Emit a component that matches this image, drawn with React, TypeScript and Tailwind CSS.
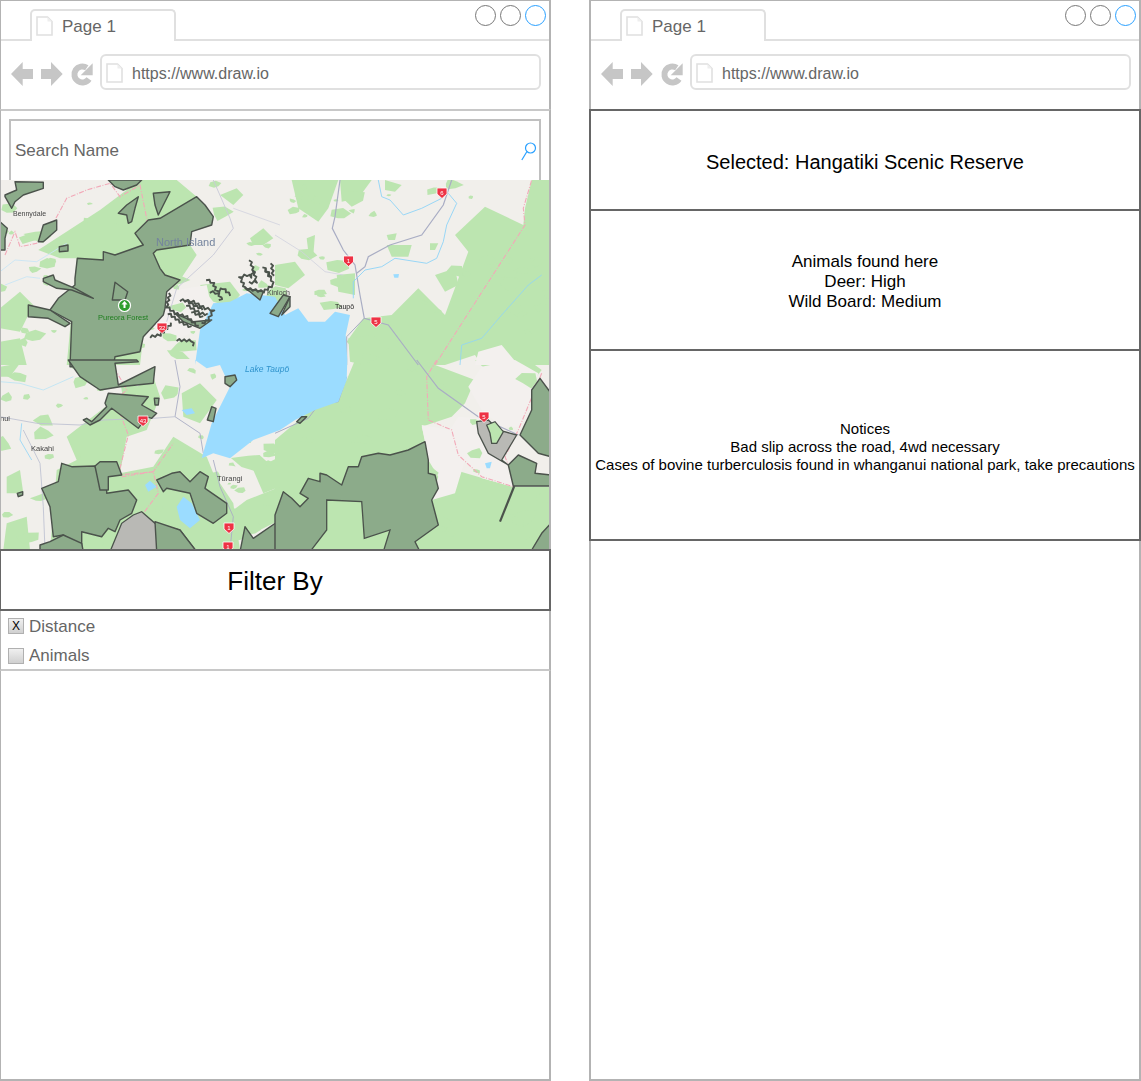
import React from "react";

const z = (ox: number, oy: number, s: string) =>
  s
    .trim()
    .split(/\s+/)
    .map((p) => {
      const [x, y] = p.split(",").map(Number);
      return `${(ox + x / 3).toFixed(1)},${(oy + y / 3).toFixed(1)}`;
    })
    .join(" ");

const jag = (s: string) => {
  const pts = s.split(" ").map((p) => p.split(",").map(Number));
  const out: string[] = [];
  let flip = 1;
  for (let i = 0; i < pts.length - 1; i++) {
    const [x1, y1] = pts[i];
    const [x2, y2] = pts[i + 1];
    const d = Math.hypot(x2 - x1, y2 - y1);
    const n = Math.max(1, Math.round(d / 2.5));
    for (let k = 0; k < n; k++) {
      const t = k / n;
      flip = -flip;
      out.push(`${(x1 + (x2 - x1) * t + (flip * (y2 - y1) * 1.1) / (d || 1)).toFixed(1)},${(y1 + (y2 - y1) * t - (flip * (x2 - x1) * 1.1) / (d || 1)).toFixed(1)}`);
    }
  }
  return out.join(" ");
};

const GREEN = "#bce5b0";
const FOREST = "#8cab8a";
const STROKE = "#4b524c";
const WATER = "#9bdcff";
const ROAD = "#a9adc4";
const RIVER = "#8fd4f7";

function makeBlobs() {
  let seed = 12345;
  const rnd = () => {
    seed = (seed * 16807) % 2147483647;
    return seed / 2147483647;
  };
  const out: string[] = [];
  for (let i = 0; i < 230; i++) {
    const x = rnd() * 550;
    const y = 180 + rnd() * 370;
    const r = 2 + rnd() * rnd() * 13;
    const n = 6;
    const pts: string[] = [];
    const rot = rnd() * 6.28;
    for (let k = 0; k < n; k++) {
      const a = rot + (k / n) * 6.28;
      const rr = r * (0.45 + rnd() * 0.75);
      pts.push(`${(x + Math.cos(a) * rr * 1.3).toFixed(1)},${(y + Math.sin(a) * rr * 0.8).toFixed(1)}`);
    }
    out.push(pts.join(" "));
  }
  return out;
}
const blobs = makeBlobs();

const greens: string[] = [
  z(275, 175, "630,95 745,150 750,100 770,15 830,15 830,570 620,570 600,540 510,570 280,570 215,500 265,430 350,420 430,340 510,420 580,230 540,180"),
  z(275, 360, "0,240 215,60 240,0 440,0 600,60 570,130 530,170 440,200 450,240 540,330 710,380 830,380 830,570 0,570"),
  z(0, 175, "115,225 300,105 420,15 530,15 590,65 640,125 575,170 570,210 590,240 540,315 500,350 430,485 420,570 200,570 230,250 180,250"),
  z(0, 360, "200,230 330,130 460,50 480,110 440,210 380,230 360,340 460,320 520,230 620,290 640,340 700,430 720,570 150,570 170,330 230,300"),
  z(0, 175, "360,15 430,15 480,130 445,135 400,70"),
  z(0, 175, "660,60 710,40 730,60 700,90"),
  z(0, 175, "750,190 790,160 820,190 790,210 760,210"),
  z(0, 175, "600,330 690,320 720,360 690,395 640,380"),
  z(275, 175, "50,15 190,15 160,100 130,140 70,100"),
  z(275, 175, "195,15 290,15 250,70 200,80"),
  z(275, 175, "330,15 380,30 360,50 330,45"),
  z(275, 175, "335,210 410,210 400,245 350,245"),
  z(275, 175, "335,180 365,175 360,195 340,195"),
  z(275, 175, "465,205 490,205 480,225 465,225"),
  z(275, 175, "185,300 240,295 240,360 190,350"),
  z(275, 175, "220,490 290,480 340,520 270,570 225,560"),
  z(275, 175, "95,190 120,180 115,240 100,230"),
  z(275, 175, "0,270 60,260 90,300 40,340 0,330"),
  z(275, 175, "480,300 540,280 550,330 510,350"),
  z(0, 360, "20,490 80,470 90,570 10,570"),
  z(0, 360, "20,350 60,330 70,400 20,400"),
  z(0, 360, "545,100 600,70 650,120 600,190 550,170"),
  z(0, 360, "660,480 740,420 840,380 840,480 720,540 680,540"),
  z(0, 360, "760,330 840,290 840,380 790,400"),
  z(0, 360, "0,20 60,10 30,50 0,50"),
  z(0, 175, "0,400 60,350 100,390 60,470 0,460"),
  z(0, 175, "0,500 60,490 80,570 0,570"),
  z(275, 360, "600,0 760,0 800,30 720,130 680,70"),
];

const whites: string[] = [
  z(275, 360, "440,195 525,210 550,170 610,175 690,310 715,380 620,355 570,300 540,400 470,420 490,350 460,300"),
  z(275, 360, "580,80 620,20 720,0 790,40 740,200 680,200 620,150"),
  z(275, 175, "610,530 680,510 730,570 600,570"),
  z(0, 175, "500,350 620,330 640,420 600,460 520,500 430,490"),
];

const forests: string[] = [
  z(0, 175, "445,135 480,130 590,65 615,90 640,125 635,150 575,170 570,210 470,225 460,235 480,280 495,300 540,315 500,350 495,400 490,420 430,485 420,530 345,545 340,575 285,575 210,575 215,440 150,405 175,370 225,330 225,310 232,250 310,255 310,230 345,240 430,210 405,175"),
  z(0, 360, "205,0 240,50 300,90 360,80 460,70 465,20 355,75 345,10 415,5 410,0"),
  z(0, 175, "85,390 150,405 210,445 195,455 145,430 85,425"),
  z(0, 175, "130,310 160,300 165,315 225,340 280,370 215,345 170,340 130,320"),
  z(0, 175, "325,15 425,15 410,30 370,45 345,35"),
  z(0, 175, "460,55 510,50 475,120 465,90"),
  z(0, 175, "355,115 380,90 415,65 405,100 395,140 385,145 380,120"),
  z(0, 175, "15,60 50,45 45,20 130,22 130,40 70,60 45,80 35,100 15,65"),
  z(0, 175, "130,150 170,135 170,165 130,200 115,200"),
  z(0, 175, "0,140 22,160 15,190 15,225 0,225"),
  z(0, 175, "178,215 204,210 204,228 178,230"),
  z(0, 360, "315,130 325,100 445,110 425,135 470,160 455,175 440,170 415,205 335,145 300,180 270,195 250,180 260,175 275,185 320,140"),
  z(0, 360, "125,385 175,365 185,310 215,320 285,318 305,380 320,390 320,400 385,390 410,420 395,460 360,480 345,515 325,505 305,530 245,515 245,560 190,525 160,530 150,440"),
  z(0, 360, "285,318 300,305 350,305 365,345 325,350 325,390 300,390"),
  z(0, 360, "470,360 515,340 540,335 570,365 600,335 625,350 615,385 680,430 680,460 640,490 590,460 570,400 500,385 490,395"),
  z(0, 360, "465,485 540,510 590,575 470,575"),
  z(0, 360, "120,555 150,545 190,525 245,550 250,575 120,575"),
  z(0, 360, "720,575 735,500 760,535 840,480 840,575"),
  z(275, 360, "0,465 25,395 50,415 75,440 100,415 75,400 100,355 135,365 135,340 155,345 200,375 220,320 250,320 260,290 310,280 345,285 400,270 450,245 460,300 460,340 480,345 490,385 470,420 490,495 420,545 435,575 0,575"),
  z(275, 360, "700,315 730,285 785,310 780,340 828,345 828,378 715,378"),
  z(275, 360, "735,225 770,150 770,90 795,55 828,100 828,290 790,280"),
  z(275, 360, "770,570 800,520 828,490 828,570"),
  z(0, 360, "675,50 705,45 710,60 690,80 675,70"),
  z(0, 360, "622,180 635,140 648,145 640,185"),
  z(0, 360, "463,115 477,115 475,135 465,135"),
  z(0, 360, "52,400 68,395 68,405 55,410"),
  z(275, 360, "65,185 80,170 95,170 75,190"),
  z(0, 175, "337,375 345,322 383,350 375,375"),
  z(150, 250, "285,115 340,125 330,150 300,125"),
  z(150, 250, "360,190 400,135 420,140 385,200"),
  z(150, 250, "395,195 420,140 420,170"),
  z(150, 250, "75,190 130,215 185,210 150,235 100,215"),
];

const greys: string[] = [
  z(0, 360, "330,575 365,490 400,465 425,455 465,490 540,510 590,575"),
  z(275, 360, "605,185 640,180 670,210 725,225 680,300 700,315 640,280 610,220"),
];

const innerGreens: string[] = [
  z(275, 360, "155,420 260,425 268,535 345,510 325,575 105,575 155,510"),
  z(275, 360, "635,195 660,185 685,215 665,250 650,250 645,220"),
];

const strips: string[] = [
  z(150, 250, "170,88 190,100 200,125 220,115 235,130 250,140"),
  z(150, 250, "180,125 205,130 215,150 200,145"),
  z(150, 250, "90,150 130,155 165,175 190,180 175,210 150,225"),
  z(150, 250, "105,150 140,170 165,180"),
  z(150, 250, "110,165 150,190 180,195"),
  z(150, 250, "60,130 50,170 75,190 110,200 150,235"),
  z(150, 250, "125,185 165,205"),
  z(150, 250, "55,190 90,215 130,235"),
  z(150, 250, "0,260 30,255 70,215"),
  z(150, 250, "80,270 125,272 135,295"),
  z(150, 250, "300,30 310,60 305,80 290,75 270,80 285,115 340,125 370,105 365,90 340,50"),
  z(150, 250, "340,50 360,75 365,90"),
  z(150, 250, "365,40 370,85"),
  z(150, 250, "310,60 320,95 290,100"),
];

const lines: [string, string, number][] = [
  [z(275, 175, "195,15 180,125 172,160 205,225 240,270 255,360 268,430 340,450 430,570"), ROAD, 1.2],
  [z(275, 175, "530,15 505,90 440,180 345,210 280,245 270,275 245,295"), ROAD, 1.2],
  [z(275, 360, "425,0 490,85 610,170 730,225"), ROAD, 1.2],
  [z(275, 175, "268,430 215,485 215,570"), ROAD, 1],
  [z(275, 360, "215,50 190,125 130,135 100,175 0,220"), ROAD, 1],
  [z(0, 360, "525,0 540,80 525,170 600,220 610,280"), ROAD, 0.9],
  [z(0, 360, "0,170 110,190 240,195 310,180 460,175 525,170"), "#c0c3d2", 0.9],
  [z(0, 360, "70,210 120,310 130,440 135,570"), "#c0c3d2", 0.9],
  [z(0, 175, "640,15 690,130 700,160 640,240 530,340 500,440"), "#c8cad8", 0.9],
  [z(0, 175, "700,100 840,150"), "#d0d2de", 0.8],
  [z(275, 175, "0,180 80,230 150,290 205,300"), "#d0d2de", 0.8],
  [z(0, 360, "640,300 660,380 700,470 690,570"), ROAD, 0.9],
  [z(275, 175, "310,15 320,65 345,75 385,120 440,100 500,70"), RIVER, 0.9],
  [z(275, 175, "520,55 545,85 515,150 505,200 485,250 455,265 360,250 320,275 270,285 235,320 235,370"), RIVER, 0.9],
  [z(275, 175, "555,570 560,510 620,490 680,420 760,330 800,300"), RIVER, 0.8],
  [z(0, 175, "0,290 45,255 110,260 200,205"), "#c9e5f5", 0.9],
  [z(0, 175, "15,330 80,305 120,310"), "#c9e5f5", 0.9],
  [z(0, 360, "0,65 60,70 130,90 220,50"), "#b9e3f5", 0.8],
  [z(0, 360, "65,190 60,240 95,300"), RIVER, 0.8],
];

const dashes: string[] = [
  z(0, 175, "15,240 45,170 60,215 110,205 165,135 200,70 260,45 330,25 360,65 420,30 440,130 440,260 380,345 305,490 330,570"),
  z(275, 175, "480,570 750,150 745,100 770,15"),
  z(0, 360, "330,0 380,90 345,120 385,225 355,345 460,335 520,250"),
  z(0, 360, "365,350 460,335 475,400 430,460"),
  z(275, 360, "485,0 455,50 460,180 530,210 550,285 620,350 715,380 715,350 690,290 730,210 800,40"),
  z(275, 360, "460,295 400,340 310,450 350,490 260,540 205,570"),
];

const pins: [number, number, string][] = [
  [162, 328, "32"],
  [143, 421, "43"],
  [348.5, 261, "1"],
  [442, 193, "6"],
  [376, 322, "5"],
  [484, 417, "5"],
  [229, 528, "1"],
  [228, 547, "1"],
];

function MapView() {
  return (
    <svg width="548" height="369" viewBox="1 180 548 369" className="block shrink-0">
      <defs>
        <filter id="soft" x="0" y="0" width="100%" height="100%">
          <feGaussianBlur stdDeviation="0.45" />
        </filter>
      </defs>
      <g filter="url(#soft)">
        <rect x="0" y="175" width="555" height="380" fill="#f1efeb" />
        {greens.map((p, i) => (
          <polygon key={i} points={p} fill={GREEN} />
        ))}
        {whites.map((p, i) => (
          <polygon key={i} points={p} fill="#f3f0ee" />
        ))}
        {blobs.map((p, i) => (
          <polygon key={i} points={p} fill={GREEN} />
        ))}
        {lines.map(([p, c, w], i) => (
          <polyline key={i} points={p} fill="none" stroke={c} strokeWidth={w} />
        ))}
        {dashes.map((p, i) => (
          <polyline key={i} points={p} fill="none" stroke="#f2a9b8" strokeWidth="1.1" strokeDasharray="5 1.5 1 1.5" />
        ))}
        <polygon
          points={
            z(0, 360, "585,0 620,25 660,15 690,80 635,190 605,295 640,280 690,295 760,240 800,225 840,210") +
            " " +
            z(275, 360, "60,180 120,150 190,125 215,60 217,0") +
            " " +
            z(275, 175, "212,480 225,420 180,410 150,440 100,440 70,400 30,420 0,365") +
            " " +
            z(0, 175, "740,355 690,380 640,385 600,465 585,570")
          }
          fill={WATER}
        />
        <polygon points={z(0, 360, "530,440 550,410 575,430 600,480 570,505 540,480")} fill={WATER} />
        <polygon points={z(0, 360, "435,375 450,362 470,380 445,395")} fill={WATER} />
        <polygon points={z(0, 360, "545,150 575,145 585,160 560,165")} fill={WATER} />
        <polygon points={z(275, 175, "355,298 372,297 370,308 358,308")} fill={WATER} />
        <polygon points={z(275, 360, "630,310 650,305 645,325 635,325")} fill={WATER} />
        {greys.map((p, i) => (
          <polygon key={i} points={p} fill="#b9b9b5" stroke={STROKE} strokeWidth="1.3" />
        ))}
        {forests.map((p, i) => (
          <polygon key={i} points={p} fill={FOREST} stroke={STROKE} strokeWidth="1.4" strokeLinejoin="round" />
        ))}
        {innerGreens.map((p, i) => (
          <polygon key={i} points={p} fill={GREEN} stroke={STROKE} strokeWidth="1.3" />
        ))}
        {strips.map((p, i) => (
          <polyline key={i} points={jag(p)} fill="none" stroke={STROKE} strokeWidth="1.9" strokeLinejoin="round" />
        ))}
        <polyline points={z(275, 360, "675,485 718,378")} fill="none" stroke={STROKE} strokeWidth="2.2" />
        {pins.map(([x, y, t], i) => (
          <g key={i}>
            <path d={`M${x - 5} ${y - 5}h10v6l-5 4.5l-5 -4.5z`} fill="#ee3344" stroke="#ffffff" strokeWidth="0.8" />
            <text x={x} y={y + 2} textAnchor="middle" fontSize="6" fill="#ffffff" fontFamily="Liberation Sans, sans-serif">
              {t}
            </text>
          </g>
        ))}
        <circle cx="124.500" cy="305.500" r="6" fill="#2f9e2f" stroke="#ffffff" strokeWidth="1.2" />
        <path d="M124.500 301l3 3.500h-2v3.500h-2v-3.500h-2z" fill="#ffffff" />
        <g fontFamily="Liberation Sans, sans-serif">
          <text x="98" y="320" fontSize="7.500" fill="#1f7f1f">Pureora Forest</text>
          <text x="156" y="246" fontSize="11" fill="#74849e">North Island</text>
          <text x="13" y="216" fontSize="7" fill="#444444">Bennydale</text>
          <text x="267" y="295" fontSize="7" fill="#444444">Kinloch</text>
          <text x="335" y="309" fontSize="7" fill="#222222">Taupō</text>
          <text x="245" y="372" fontSize="8.500" fontStyle="italic" fill="#2f93cc">Lake Taupō</text>
          <text x="31" y="451" fontSize="7.500" fill="#444444">Kakahi</text>
          <text x="217" y="481" fontSize="7.500" fill="#444444">Tūrangi</text>
          <text x="0" y="421" fontSize="7.500" fill="#444444">nui</text>
        </g>
      </g>
    </svg>
  );
}

function FileIcon() {
  return (
    <svg viewBox="0 0 17 20" className="h-[20px] w-[17px] shrink-0">
      <path d="M1 1h10.500l4.500 4.500v13.500h-15z" fill="#ffffff" stroke="#e0e0e0" strokeWidth="1.6" />
      <path d="M11.500 1v4.500h4.500z" fill="#eeeeee" />
    </svg>
  );
}

function Chrome({ side }: { side: string }) {
  return (
    <div className={`flex h-[109px] shrink-0 flex-col border-t border-[#b3b3b3] bg-white ${side}`}>
      <div className="flex h-[40px] items-end justify-between border-b-2 border-[#e0e0e0]">
        <div className="relative top-[2px] ml-[29px] flex h-[32px] w-[146px] items-center rounded-t-[5px] border-x-2 border-t-2 border-[#e0e0e0] bg-white pl-[4px]">
          <FileIcon />
          <span className="ml-[9px] pt-[1px] text-[17px] text-[#666666]">Page 1</span>
        </div>
        <div className="mb-[13px] mr-[3px] flex gap-[4px]">
          <div className="h-[21px] w-[21px] rounded-full border-[1.5px] border-[#777777]" />
          <div className="h-[21px] w-[21px] rounded-full border-[1.5px] border-[#777777]" />
          <div className="h-[21px] w-[21px] rounded-full border-[1.5px] border-[#29a0ff]" />
        </div>
      </div>
      <div className="flex flex-1 items-start pl-[10px] pr-[8px] pt-[13px]">
        <svg width="88" height="26" viewBox="0 0 88 26" className="mt-[7px] shrink-0">
          <path d="M0 13l11.700 -12v7h10.300v10h-10.300v7z" fill="#c6c6c6" />
          <path d="M51.700 13l-11.700 -12v7h-10v10h10v7z" fill="#c6c6c6" />
          <path d="M75.800 6.800A8 8 0 1 0 78 18" fill="none" stroke="#c6c6c6" strokeWidth="6" />
          <path d="M81.700 2.300v12h-12z" fill="#c6c6c6" />
        </svg>
        <div className="ml-[1px] flex h-[36px] flex-1 items-center rounded-[6px] border-2 border-[#e0e0e0] pl-[4px] pt-[2px]">
          <FileIcon />
          <span className="ml-[9px] pt-[2px] text-[16px] text-[#666666]">https://www.draw.io</span>
        </div>
      </div>
    </div>
  );
}

function Left() {
  return (
    <div className="flex h-[1081px] w-[551px] shrink-0 flex-col">
      <Chrome side="border-l border-r-2 border-[#b3b3b3]" />
      <div className="flex h-[71px] shrink-0 flex-col border-l border-r-2 border-t-2 border-l-[#b3b3b3] border-r-[#b3b3b3] border-t-[#c8c8c8] pl-[8px] pr-[8px] pt-[8px]">
        <div className="flex flex-1 items-center justify-between border-x-2 border-t-2 border-[#c0c0c0] pl-[4px] pr-[1px]">
          <span className="pt-[1px] text-[17px] text-[#666666]">Search Name</span>
          <svg width="18" height="20" viewBox="0 0 18 20">
            <circle cx="10.500" cy="7" r="5" fill="none" stroke="#29a0ff" strokeWidth="1.200" />
            <path d="M6.800 10.700l-5 8.300" stroke="#29a0ff" strokeWidth="1.200" />
          </svg>
        </div>
      </div>
      <div className="flex shrink-0 border-l border-r-2 border-[#b3b3b3]">
        <MapView />
      </div>
      <div className="flex h-[62px] shrink-0 items-center justify-center border-y-2 border-l border-r-2 border-[#666666] pt-[3px] text-[26px] text-black">
        Filter By
      </div>
      <div className="flex h-[60px] shrink-0 flex-col border-b-2 border-l border-r-2 border-b-[#c8c8c8] border-l-[#b3b3b3] border-r-[#b3b3b3] pl-[7px]">
        <div className="flex h-[30px] items-center">
          <div className="flex h-[16px] w-[16px] items-center justify-center border border-[#b0b0b0] bg-gradient-to-b from-[#f0f0f0] to-[#d0d0d0] text-[12px] text-black">
            X
          </div>
          <span className="ml-[5px] pt-[1px] text-[17px] text-[#666666]">Distance</span>
        </div>
        <div className="flex h-[28px] items-center pt-[2px]">
          <div className="h-[16px] w-[16px] border border-[#b0b0b0] bg-gradient-to-b from-[#f0f0f0] to-[#d0d0d0]" />
          <span className="ml-[5px] text-[17px] text-[#666666]">Animals</span>
        </div>
      </div>
      <div className="flex-1 border-b-2 border-l border-r-2 border-[#b3b3b3]" />
    </div>
  );
}

function Right() {
  return (
    <div className="flex h-[1081px] w-[552px] shrink-0 flex-col text-black">
      <Chrome side="border-x-2 border-[#b3b3b3]" />
      <div className="flex h-[100px] shrink-0 items-center justify-center border-x-2 border-t-2 border-[#666666] pt-[3px] text-[20px]">
        Selected: Hangatiki Scenic Reserve
      </div>
      <div className="flex h-[140px] shrink-0 flex-col items-center justify-center border-x-2 border-t-2 border-[#666666] pt-[3px] text-center text-[17px] leading-[20px]">
        <div>Animals found here</div>
        <div>Deer: High</div>
        <div>Wild Board: Medium</div>
      </div>
      <div className="flex h-[192px] shrink-0 flex-col items-center justify-center border-2 border-[#666666] pt-[4px] text-center text-[15px] leading-[18px]">
        <div>Notices</div>
        <div>Bad slip across the road, 4wd necessary</div>
        <div>Cases of bovine turberculosis found in whanganui national park, take precautions</div>
      </div>
      <div className="flex-1 border-x-2 border-b-2 border-[#b3b3b3]" />
    </div>
  );
}

export default function App() {
  return (
    <div className="flex h-[1081px] w-[1141px] gap-[38px] overflow-hidden bg-white font-['Liberation_Sans',sans-serif]">
      <Left />
      <Right />
    </div>
  );
}
